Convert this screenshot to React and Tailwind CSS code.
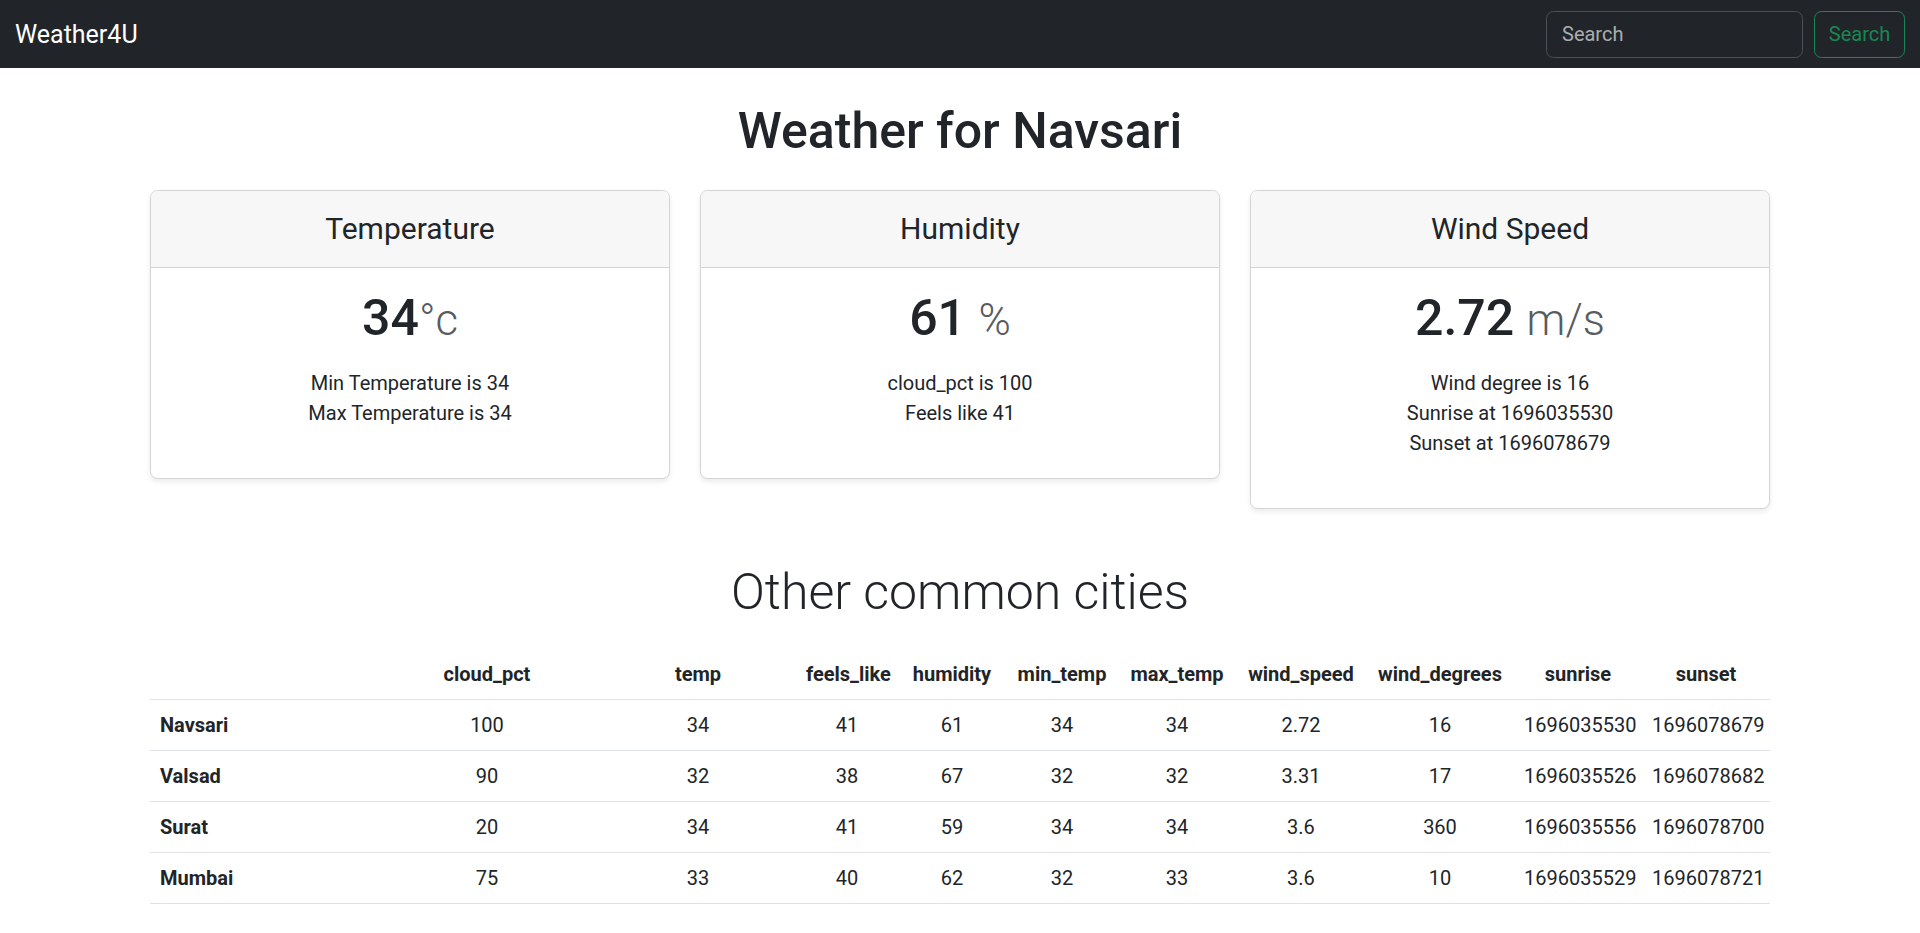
import React from "react";

const cities = [
  { name: "Navsari", cloud_pct: 100, temp: 34, feels_like: 41, humidity: 61, min_temp: 34, max_temp: 34, wind_speed: 2.72, wind_degrees: 16, sunrise: 1696035530, sunset: 1696078679 },
  { name: "Valsad", cloud_pct: 90, temp: 32, feels_like: 38, humidity: 67, min_temp: 32, max_temp: 32, wind_speed: 3.31, wind_degrees: 17, sunrise: 1696035526, sunset: 1696078682 },
  { name: "Surat", cloud_pct: 20, temp: 34, feels_like: 41, humidity: 59, min_temp: 34, max_temp: 34, wind_speed: 3.6, wind_degrees: 360, sunrise: 1696035556, sunset: 1696078700 },
  { name: "Mumbai", cloud_pct: 75, temp: 33, feels_like: 40, humidity: 62, min_temp: 32, max_temp: 33, wind_speed: 3.6, wind_degrees: 10, sunrise: 1696035529, sunset: 1696078721 },
];

// column widths measured off the layout
const columns = [
  { key: "cloud_pct", w: "w-[226px]" },
  { key: "temp", w: "w-[196px]" },
  { key: "feels_like", w: "w-[102px]" },
  { key: "humidity", w: "w-[108px]" },
  { key: "min_temp", w: "w-[112px]" },
  { key: "max_temp", w: "w-[118px]" },
  { key: "wind_speed", w: "w-[130px]" },
  { key: "wind_degrees", w: "w-[148px]" },
  { key: "sunrise", w: "w-[128px]" },
  { key: "sunset", w: "w-[128px]" },
];

function WeatherCard({ title, value, unit, lines }) {
  return (
    <div className="bg-white border border-[#d3d4d5] rounded-[7.5px] shadow-[0_2.5px_5px_rgba(0,0,0,0.075)] overflow-hidden">
      <div className="bg-[#f7f7f7] border-b border-[#d3d4d5] py-[20px] text-center">
        <h4 className="text-[30px] leading-[36px] font-normal">{title}</h4>
      </div>
      <div className="p-[20px] text-center">
        <h1 className="text-[50px] leading-[60px] font-medium">
          {value}
          <small className="text-[0.875em] leading-none font-light text-[#595c5f]">{unit}</small>
        </h1>
        <ul className="mt-[20px] mb-[30px] text-[20px] leading-[30px]">
          {lines.map((l) => (
            <li key={l}>{l}</li>
          ))}
        </ul>
      </div>
    </div>
  );
}

export default function App() {
  return (
    <div className="min-h-screen bg-white text-[#212529] font-['Segoe_UI',Roboto,'Noto_Sans',sans-serif]">
      <nav className="bg-[#212529] h-[68px] px-[15px] flex items-center justify-between">
        <a href="#" className="text-white text-[25px] leading-[37px]">Weather4U</a>
        <form className="flex gap-[11px]" onSubmit={(e) => e.preventDefault()}>
          <input
            type="search"
            placeholder="Search"
            className="w-[257px] h-[47px] px-[15px] rounded-[7.5px] border border-[#495057] bg-[#212529] text-[20px] text-[#dee2e6] placeholder:text-[#a9adb1] outline-none"
          />
          <button className="w-[91px] h-[47px] rounded-[7.5px] border border-[#198754] text-[#198754] text-[20px]">
            Search
          </button>
        </form>
      </nav>

      <main className="w-[1620px] mx-auto">
        <h1 className="text-center text-[50px] leading-[60px] font-medium pt-[33px] pb-[29px]">
          Weather for Navsari
        </h1>

        <div className="grid grid-cols-3 gap-[30px] items-start">
          <WeatherCard
            title="Temperature"
            value="34"
            unit="°c"
            lines={["Min Temperature is 34", "Max Temperature is 34"]}
          />
          <WeatherCard
            title="Humidity"
            value="61 "
            unit="%"
            lines={["cloud_pct is 100", "Feels like 41"]}
          />
          <WeatherCard
            title="Wind Speed"
            value="2.72 "
            unit="m/s"
            lines={["Wind degree is 16", "Sunrise at 1696035530", "Sunset at 1696078679"]}
          />
        </div>

        <h2 className="text-center text-[50px] leading-[60px] font-light mt-[53px] mb-[27px]">
          Other common cities
        </h2>

        <table className="w-full table-fixed text-[20px] leading-[30px]">
          <thead>
            <tr className="border-b border-[#dee2e6]">
              <th className="w-[224px] p-[10px]"></th>
              {columns.map((c) => (
                <th key={c.key} className={`${c.w} p-[10px] font-bold text-center whitespace-nowrap`}>
                  {c.key}
                </th>
              ))}
            </tr>
          </thead>
          <tbody>
            {cities.map((city) => (
              <tr key={city.name} className="border-b border-[#dee2e6]">
                <th className="p-[10px] font-bold text-left">{city.name}</th>
                {columns.map((c) => (
                  <td key={c.key} className="p-[10px] text-center whitespace-nowrap">
                    {city[c.key]}
                  </td>
                ))}
              </tr>
            ))}
          </tbody>
        </table>
      </main>
    </div>
  );
}
